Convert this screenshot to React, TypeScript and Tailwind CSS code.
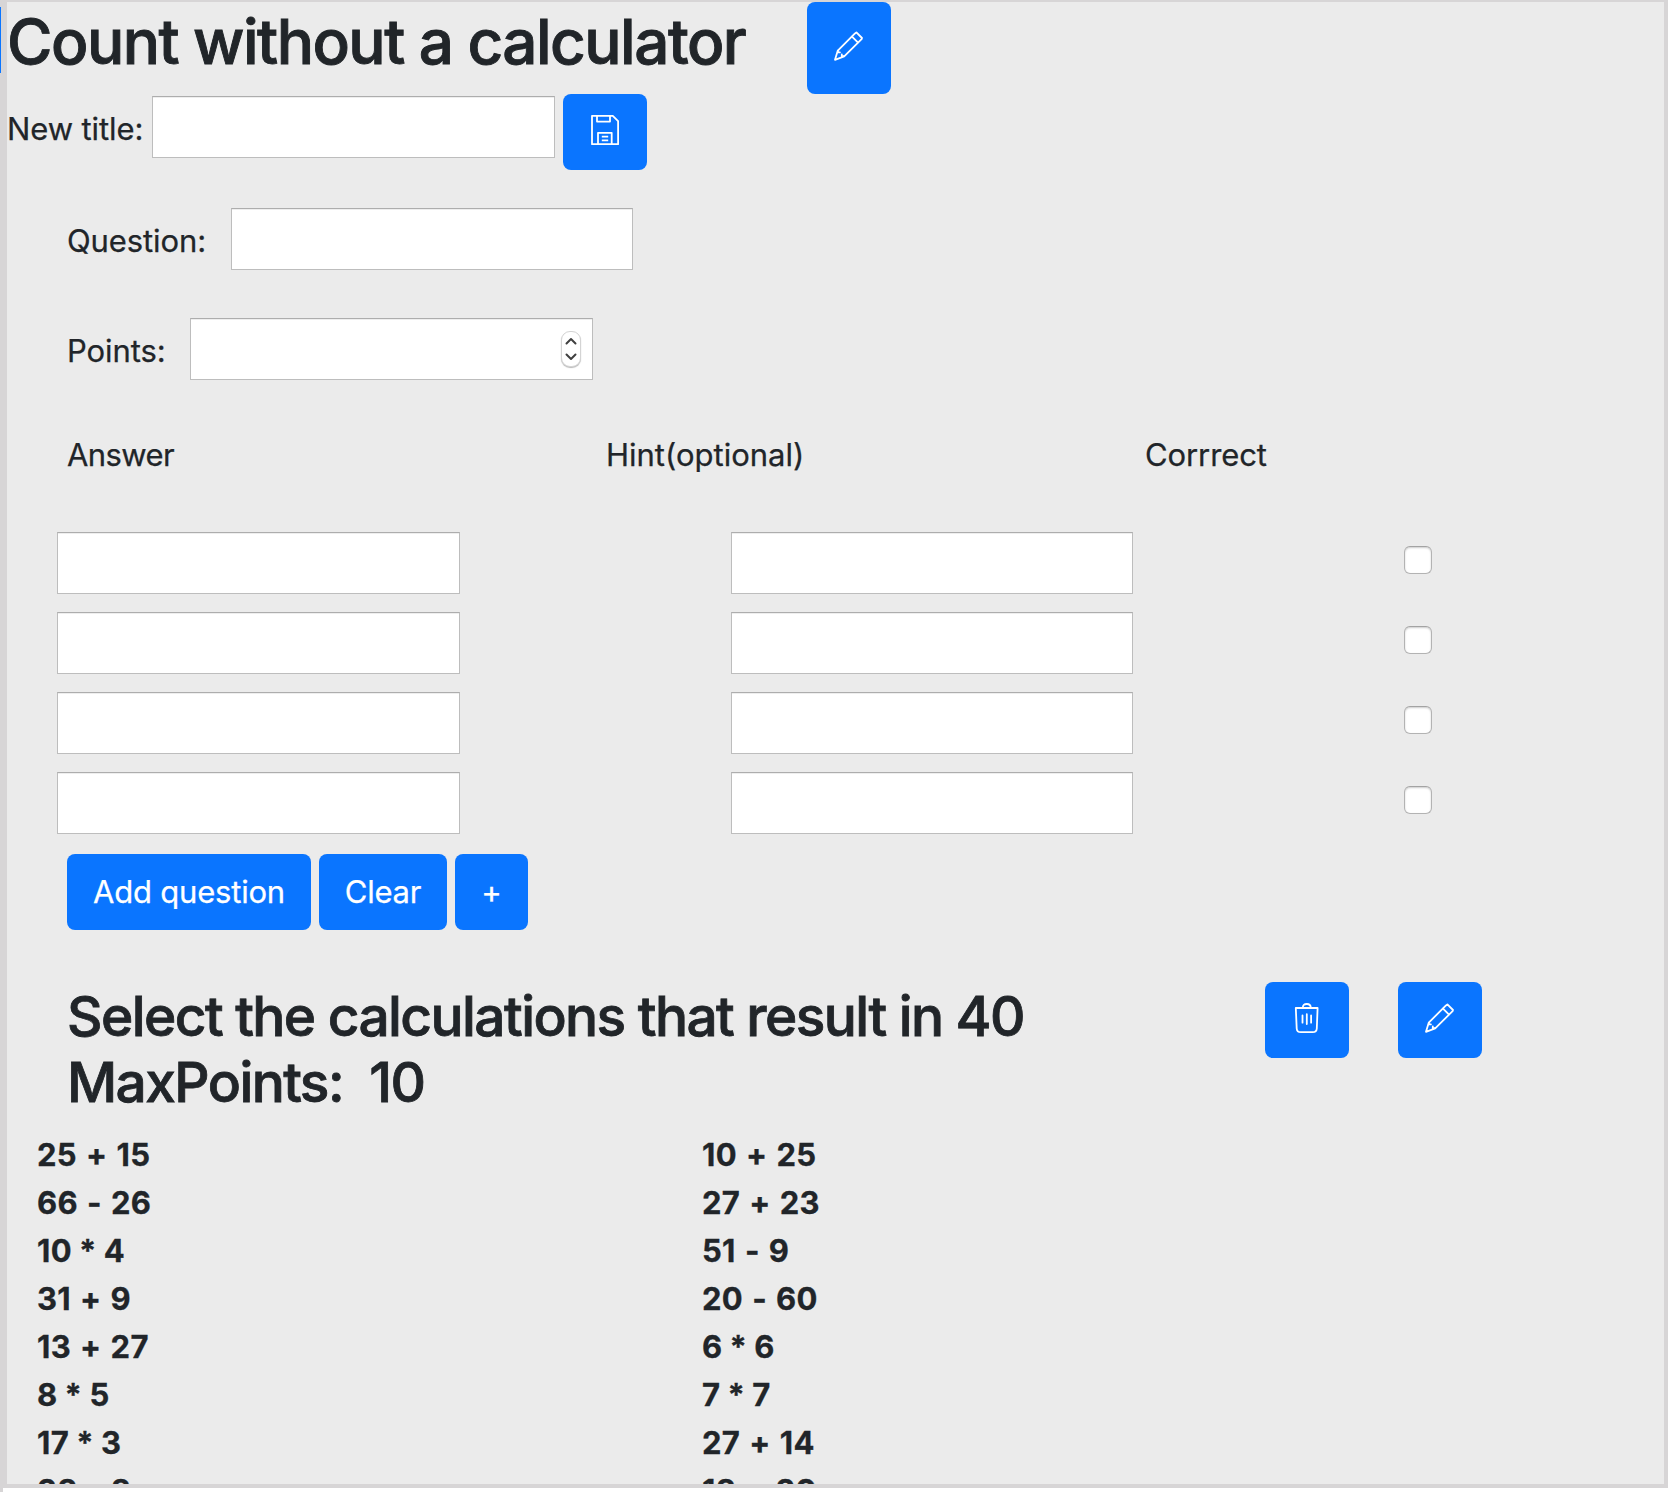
import React from "react";

const INPUT =
  "block h-[62px] rounded-none border border-[#bdbdbd] border-t-[#adadad] bg-white outline-none shadow-[inset_0_1px_0_#eeeeee]";
const BUTTON =
  "flex h-[76px] shrink-0 items-center justify-center rounded-[8px] bg-[#0a75ff] text-white tracking-[-0.2px]";

function PencilIcon() {
  return (
    <svg width="32" height="32" viewBox="0 0 32 32" fill="none" stroke="currentColor" strokeWidth="1.8" strokeLinejoin="round" strokeLinecap="round">
      <path d="M23.4 2.4 29 8l-.4 1.1L11.2 26.4 2 29.8 4.8 20.6 22 3.4z" />
      <path d="M19 6.6l5.8 5.8M4.9 20.6v1.8h2M8.800 24.400v1.800h2.200" />
    </svg>
  );
}

function SaveIcon() {
  return (
    <svg width="32" height="32" viewBox="0 0 32 32" fill="none" stroke="currentColor" strokeWidth="1.8" strokeLinejoin="round">
      <path d="M3 1.800h20.800l5.300 5.300v23.100H3z" />
      <path d="M8 2v5.600h13V2M9 30V18.800h13.700V30M12.800 22.600h6.400M12.800 26.400h6.400" />
    </svg>
  );
}

function TrashIcon() {
  return (
    <svg width="32" height="32" viewBox="0 0 32 32" fill="none" stroke="currentColor" strokeWidth="1.8" strokeLinejoin="round" strokeLinecap="round">
      <path d="M4.800 6h21.800l-.8 20.500q-.2 3.700-4 3.700H9.800q-3.900 0-4.100-3.700z" />
      <path d="M11.800 5.800Q11.800 2 15.800 2t4 3.800M11.500 13.500v7.200M15.800 12.200v9.900M20.100 13.500v7.200" />
    </svg>
  );
}

const LEFT = ["25 + 15", "66 - 26", "10 * 4", "31 + 9", "13 + 27", "8 * 5", "17 * 3", "38 - 8"];
const RIGHT = ["10 + 25", "27 + 23", "51 - 9", "20 - 60", "6 * 6", "7 * 7", "27 + 14", "18 + 20"];

function Answers({ items }: { items: string[] }) {
  return (
    <ul className="w-[665px] font-bold tracking-[0.3px] [-webkit-text-stroke:0.3px]">
      {items.map((item) => (
        <li
          key={item}
          className={`h-12 leading-[48px] ${item.includes("*") ? "[word-spacing:-0.5px]" : "[word-spacing:1.5px]"}`}
        >
          {item}
        </li>
      ))}
    </ul>
  );
}

export default function App() {
  return (
    <div className="flex h-[1492px] w-[1668px] flex-col overflow-hidden bg-[#d7d5d6] pt-[2px] font-['Inter',sans-serif] text-[31px] text-[#212529] [-webkit-text-stroke:0.25px]">
      <div className="flex h-[1482px] shrink-0">
        <div className="w-[7px] shrink-0 pt-[5px]">
          <div className="h-[66px] w-px bg-[#0a75ff]" />
        </div>
        <main className="flex h-[1482px] w-[1657px] shrink-0 flex-col overflow-hidden bg-[#ebebeb]">
          <div className="flex h-[92px] shrink-0">
            <h1 className="w-[800px] whitespace-nowrap text-[62px] font-medium leading-[79px] tracking-[-1.52px] [-webkit-text-stroke:0.9px]">
              Count without a calculator
            </h1>
            <button className={`${BUTTON} h-[92px]! w-[84px] pb-1`}><PencilIcon /></button>
          </div>
          <div className="flex h-[76px] shrink-0">
            <label className="w-[145px] whitespace-nowrap pt-[11px] leading-[48px] tracking-[-0.1px]">New title:</label>
            <input className={`${INPUT} mt-[2px] w-[403px]`} />
            <button className={`${BUTTON} ml-2 w-[84px] pb-1`}><SaveIcon /></button>
          </div>
          <div className="mt-[38px] flex h-[62px] shrink-0 pl-[60px]">
            <label className="w-[164px] pt-[9px] leading-[48px] tracking-[-0.1px]">Question:</label>
            <input className={`${INPUT} w-[402px]`} />
          </div>
          <div className="mt-[48px] flex h-[62px] shrink-0 pl-[60px]">
            <label className="w-[123px] pt-[9px] leading-[48px] tracking-[-0.1px]">Points:</label>
            <div className={`${INPUT} flex! w-[403px] items-center justify-end pr-[11px]`}>
              <div className="flex h-[36px] w-[20px] flex-col items-center justify-center rounded-[9px] border border-[#d4d4d4] bg-white shadow-[0_1px_1px_#bbbbbb]">
                <svg width="12" height="26" viewBox="0 0 12 26" fill="none" stroke="#404040" strokeWidth="2" strokeLinecap="round" strokeLinejoin="round">
                  <path d="M1.500 7.500 6 3l4.500 4.500M1.500 18.500 6 23l4.500-4.500" />
                </svg>
              </div>
            </div>
          </div>
          <div className="mt-[51px] flex h-12 shrink-0 pl-[60px] leading-[48px]">
            <div className="w-[539px] tracking-[-0.6px]">Answer</div>
            <div className="w-[539px]">Hint(optional)</div>
            <div className="tracking-[-0.1px]">Corrrect</div>
          </div>
          <div className="mt-[53px] flex shrink-0 flex-col gap-[18px] pl-[50px]">
            {[0, 1, 2, 3].map((row) => (
              <div key={row} className="flex">
                <input className={`${INPUT} w-[403px]`} />
                <input className={`${INPUT} ml-[271px] w-[402px]`} />
                <input type="checkbox" className="ml-[271px] mt-[14px] size-[28px] appearance-none rounded-[6px] border border-[#b3b3b3] border-t-[#a3a3a3] bg-white shadow-[inset_0_1px_2px_#cccccc]" />
              </div>
            ))}
          </div>
          <div className="mt-5 flex shrink-0 gap-2 pl-[60px]">
            <button className={`${BUTTON} w-[244px]`}>Add question</button>
            <button className={`${BUTTON} w-[128px]`}>Clear</button>
            <button className={`${BUTTON} w-[73px]`}>+</button>
          </div>
          <div className="mt-[52px] flex h-[149px] shrink-0 pl-[60px]">
            <h2 className="w-[1198px] pt-px text-[55px] font-medium leading-[66px] tracking-[-1.57px] [-webkit-text-stroke:0.8px]">
              <div>Select the calculations that result in 40</div>
              <div>MaxPoints:&nbsp; 10</div>
            </h2>
            <button className={`${BUTTON} w-[84px] pb-1`}><TrashIcon /></button>
            <button className={`${BUTTON} ml-[49px] w-[84px] pb-1`}><PencilIcon /></button>
          </div>
          <div className="flex shrink-0 pl-[30px]">
            <Answers items={LEFT} />
            <Answers items={RIGHT} />
          </div>
        </main>
      </div>
      <div className="mt-1 ml-[3px] h-1 shrink-0 bg-white" />
    </div>
  );
}
